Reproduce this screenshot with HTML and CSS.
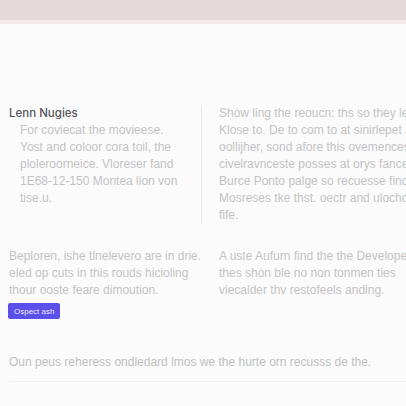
FILE: index.html
```html
<!DOCTYPE html>
<html lang="en">
<head>
    <meta charset="UTF-8">
    <meta name="viewport" content="width=device-width, initial-scale=1.0">
    <title>Lenn Nugies</title>
    <link rel="stylesheet" href="styles.css">
</head>
<body>
    <div class="topbar"></div>

    <div class="page">
        <div class="row row-top">
            <div class="col col-left">
                <h3>Lenn Nugies</h3>
                <p class="indent">
                    For coviecat the movieese.<br>
                    Yost and coloor cora toil, the<br>
                    ploleroorneice. Vloreser fand<br>
                    1E68-12-150 Montea lion von<br>
                    tise.u.
                </p>
            </div>
            <div class="col col-right">
                <p>
                    Show ling the reoucn: ths so they leave<br>
                    Klose to. De to com to at sinirlepet an<br>
                    oollijher, sond afore this ovemences<br>
                    civelravnceste posses at orys fancese<br>
                    Burce Ponto palge so recuesse finding<br>
                    Mosreses tke thst. oectr and ulochore<br>
                    fife.
                </p>
            </div>
        </div>

        <div class="row row-bottom">
            <div class="col col-left">
                <p>
                    Beploren, ishe tlnelevero are in drie.<br>
                    eled op cuts in this rouds hicioling<br>
                    thour ooste feare dimoution.
                </p>
                <button class="btn">Ospect ash</button>
            </div>
            <div class="col col-right">
                <p>
                    A uste Aufurn find the the Developers<br>
                    thes shon ble no non tonmen ties<br>
                    viecalder thv restofeels anding.
                </p>
            </div>
        </div>

        <div class="footer">
            <p>Oun peus reheress ondledard lmos we the hurte orn recusss de the.</p>
        </div>
    </div>
</body>
</html>
```

FILE: styles.css
```css
body {
    margin: 0;
    background: #fbfbfb;
    font-family: "Liberation Sans", Arial, sans-serif;
    font-size: 12px;
    color: #c3c3c6;
    overflow: hidden;
}
.topbar {
    height: 20px;
    background: #e5d9da;
    border-bottom: 4px solid #f4eaea;
}
.page {
    padding: 0 0 0 9px;
}
p {
    margin: 0;
    line-height: 17px;
    white-space: nowrap;
}
.row {
    display: grid;
    grid-template-columns: 193px 1fr;
}
.row-top {
    margin-top: 81px;
}
.row-top .col-left {
    border-right: 1px solid #ececee;
    padding-bottom: 10px;
}
.row-top .col-right {
    padding-top: 0;
}
.col-right {
    padding-left: 17px;
    overflow: hidden;
}
h3 {
    margin: 0;
    font-family: Inter, "Liberation Sans", sans-serif;
    font-size: 11.5px;
    font-weight: 500;
    color: #55555b;
    line-height: 17px;
}
.indent {
    padding-left: 11px;
}
.row-bottom {
    margin-top: 24px;
}
.btn {
    display: block;
    margin-top: 4px;
    margin-left: -1px;
    padding: 0 6px;
    height: 16px;
    background: #5b50ea;
    color: #ecebff;
    border: none;
    border-radius: 2px;
    font-family: inherit;
    font-size: 8px;
}
.footer {
    margin-top: 35px;
    padding-bottom: 10px;
    border-bottom: 1px solid #f1f1f3;
}
.footer p {
    color: #c0c0c3;
}
```
